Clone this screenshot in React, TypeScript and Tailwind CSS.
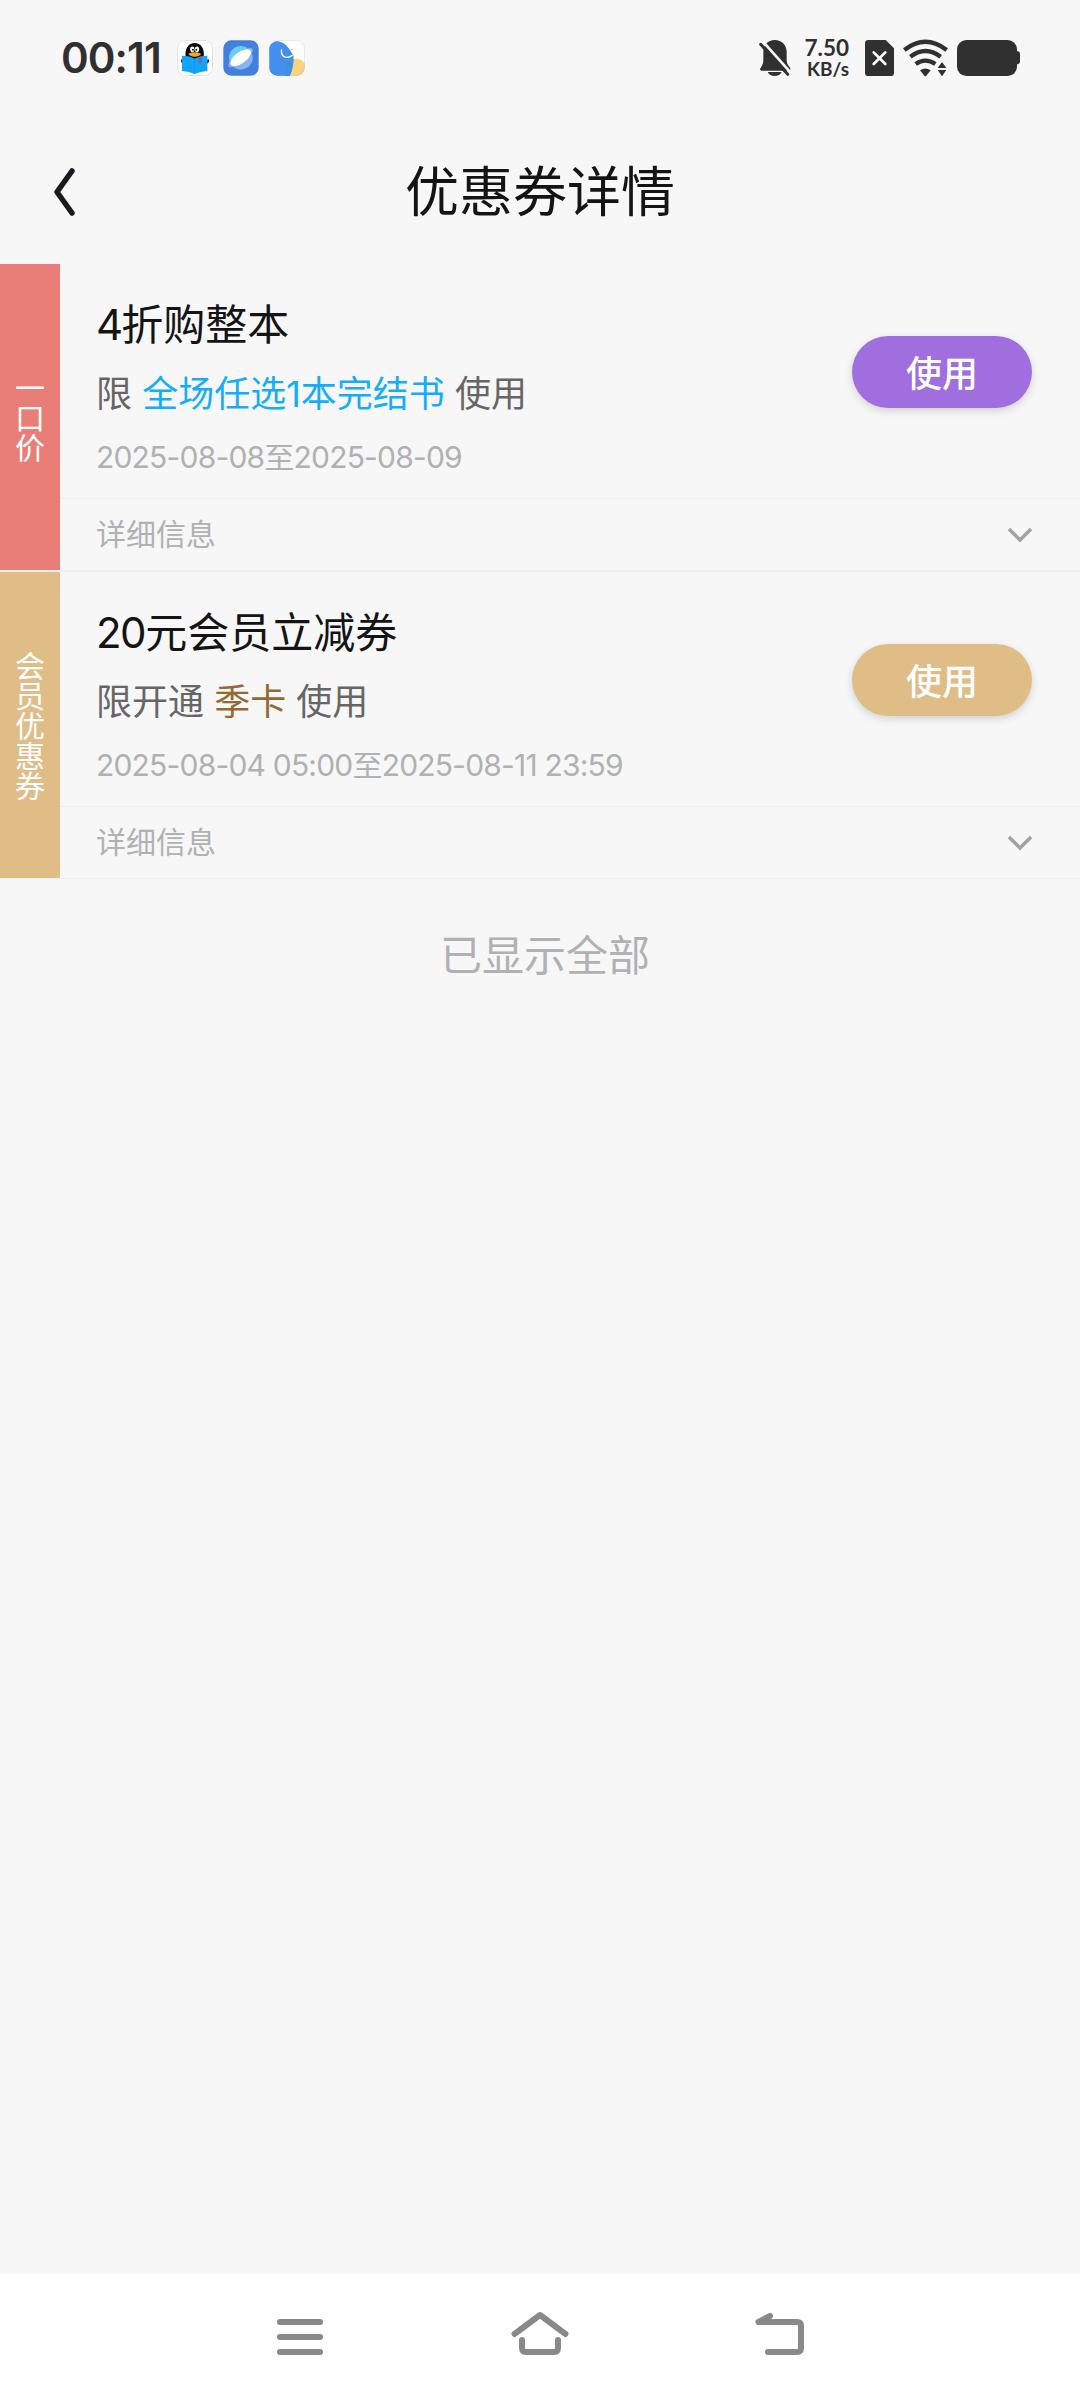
import type { ReactNode } from "react";
import { clsx } from "clsx";

interface Coupon {
  id: string;
  tag: string;
  title: ReactNode;
  scope: ReactNode;
  period: string;
  tagColor: string;
  buttonColor: string;
}

const COUPONS: Coupon[] = [
  {
    id: "fixed-price",
    tag: "一口价",
    title: (
      <>
        <span className="tracking-[-2px]">4</span>折购整本
      </>
    ),
    scope: (
      <>
        限 <span className="text-[#16adf8]">全场任选1本完结书</span> 使用
      </>
    ),
    period: "2025-08-08至2025-08-09",
    tagColor: "bg-[#e97e78]",
    buttonColor: "bg-[#a06edf]",
  },
  {
    id: "member",
    tag: "会员优惠券",
    title: (
      <>
        <span className="tracking-[-1.5px]">20</span>元会员立减券
      </>
    ),
    scope: (
      <>
        限开通 <span className="text-[#956932]">季卡</span> 使用
      </>
    ),
    period: "2025-08-04 05:00至2025-08-11 23:59",
    tagColor: "bg-[#e0bc87]",
    buttonColor: "bg-[#e0bc87]",
  },
];

function ReaderAppIcon() {
  return (
    <svg className="h-9 w-9" viewBox="0 0 108 108">
      <rect x="1.5" y="1.5" width="105" height="105" rx="24" fill="#fff" stroke="#e2e2e2" strokeWidth="3" />
      <path d="M26 52C22 24 36 9 53 9s31 15 27 43l-10 8H36z" fill="#080808" />
      <path d="M12 58l9 2v12c-6-1-11-6-9-14zM96 58l-9 2v12c6-1 11-6 9-14z" fill="#222" />
      <ellipse cx="46" cy="28" rx="6.5" ry="8.5" fill="#fff" />
      <ellipse cx="60" cy="28" rx="6.5" ry="8.5" fill="#fff" />
      <circle cx="48" cy="29" r="3" fill="#111" />
      <circle cx="58" cy="29" r="3" fill="#111" />
      <path d="M34 41q19-8 38 0-3 8-19 9-16-1-19-9z" fill="#f6a623" />
      <path d="M15 47q24 0 38 9 14-9 38-9v46q-22 1-38 9-16-8-38-9z" fill="#10a5fb" />
      <path d="M53 56v46" stroke="#0788dc" strokeWidth="1.5" />
      <path d="M65 51l9-2v22l-5-3-4 4z" fill="#8161a5" />
    </svg>
  );
}

function BrowserAppIcon() {
  return (
    <svg className="h-9 w-9" viewBox="0 0 108 108">
      <rect x="1" y="1" width="106" height="106" rx="24" fill="#437fdd" />
      <circle cx="53" cy="53" r="35" fill="#67cdf5" />
      <path d="M21 67L86 38a35 35 0 0 1-65 29z" fill="#8ab3f2" />
      <ellipse cx="53" cy="53" rx="44" ry="15" transform="rotate(-36 53 53)" fill="#8ab3f2" />
      <ellipse cx="53" cy="53" rx="36" ry="17" transform="rotate(-36 53 53)" fill="#fff" />
    </svg>
  );
}

function ElephantAppIcon() {
  return (
    <svg className="h-9 w-9" viewBox="0 0 108 108">
      <clipPath id="elephant-frame">
        <rect x="1" y="1" width="106" height="106" rx="24" />
      </clipPath>
      <g clipPath="url(#elephant-frame)">
        <rect width="108" height="108" fill="#fff" />
        <circle cx="81" cy="89" r="33" fill="#fad27e" />
        <path d="M0 22C8 6 22 2 32 5c19 4 31 23 41 41 3 18-2 41-11 62H0z" fill="#438ff0" />
        <path d="M48 82c2-12 12-22 24-25 1 16-2 36-10 51H50c-2-9-3-17-2-26z" fill="#3f91df" />
        <path d="M37 30c0 13 6 22 16 22 7 0 13-2 17-6" fill="none" stroke="#fff" strokeWidth="4" strokeLinecap="round" />
        <path d="M65 30q5-5 7 1" fill="none" stroke="#999" strokeWidth="2" />
      </g>
      <rect x="1.5" y="1.5" width="105" height="105" rx="24" fill="none" stroke="#000" strokeOpacity="0.08" strokeWidth="3" />
    </svg>
  );
}

function MutedBellIcon() {
  return (
    <svg className="h-[38px] w-8" viewBox="57 57 96 114">
      <path d="M104 60c22 0 36 15 36 36v24c0 9 3 15 9 22 4 6 2 10-3 10H65c-6 0-6-4-2-10 5-8 7-13 7-22V96c0-21 13-36 34-36z" fill="#303030" />
      <path d="M83 156h42c-4 8-11 12-21 12s-17-4-21-12z" fill="#303030" />
      <path d="M69 65L152 158" stroke="#f7f7f7" strokeWidth="8" />
      <path d="M62 73L143 163" stroke="#303030" strokeWidth="9" strokeLinecap="round" />
    </svg>
  );
}

function NoSimIcon() {
  return (
    <svg className="h-9 w-[29px]" viewBox="375 60 87 108">
      <path d="M385 60h52l25 25v73q0 10-10 10h-67q-10 0-10-10V70q0-10 10-10z" fill="#303030" />
      <path d="M401 97l35 35M436 97l-35 35" stroke="#fff" strokeWidth="8" strokeLinecap="round" />
    </svg>
  );
}

function WifiIcon() {
  return (
    <svg className="h-[38px] w-[45px]" viewBox="489 59 135 114">
      <g fill="none" stroke="#303030" strokeWidth="13">
        <path d="M493 92Q556 43 620 92" />
        <path d="M511 112Q556 78 602 112" />
        <path d="M527 134Q556 114 586 134" />
      </g>
      <path d="M540 153q16-11 32 0l-13 16q-3 3-6 0z" fill="#303030" />
      <path d="M593 146l13-18 13 18zM593 152h26l-13 19z" fill="#303030" />
    </svg>
  );
}

function BatteryIcon() {
  return (
    <svg className="h-9 w-[63px]" viewBox="651 60 189 108">
      <rect x="651" y="60" width="180" height="108" rx="28" fill="#303030" />
      <path d="M829 93q11 1 11 8v24q0 7-11 8z" fill="#303030" />
    </svg>
  );
}

function StatusBar() {
  return (
    <div className="flex h-[116px] items-center justify-between pr-[60px] pl-[60px] text-[#303030]">
      <div className="flex items-center">
        <span className="w-[117px] pl-px text-[42px] leading-none font-semibold tracking-[-0.9px]">00:11</span>
        <div className="flex gap-2.5">
          <ReaderAppIcon />
          <BrowserAppIcon />
          <ElephantAppIcon />
        </div>
      </div>
      <div className="flex items-center">
        <MutedBellIcon />
        <div className="ml-3 w-[46px] text-right font-[Lato] font-bold">
          <div className="text-[22.5px] leading-[22px]">7.50</div>
          <div className="text-[19px] leading-5">KB/s</div>
        </div>
        <div className="ml-4 flex items-center">
          <NoSimIcon />
          <span className="mr-[9px] ml-[9px] flex">
            <WifiIcon />
          </span>
          <BatteryIcon />
        </div>
      </div>
    </div>
  );
}

function Header() {
  return (
    <header className="grid h-[148px] grid-cols-[200px_1fr_200px] items-center pt-1">
      <button className="ml-[54px] w-[21px]" aria-label="返回">
        <svg className="h-12 w-[21px]" viewBox="0 0 21 48">
          <path d="M18 3L3 24l15 21" fill="none" stroke="#1a1a22" strokeWidth="5.5" strokeLinecap="round" strokeLinejoin="round" />
        </svg>
      </button>
      <h1 className="pt-0.5 text-center text-[54px] leading-[60px] text-[#141414]">优惠券详情</h1>
    </header>
  );
}

function CouponCard({ coupon }: { coupon: Coupon }) {
  return (
    <article className="flex h-[306px]">
      <div className={clsx("flex w-[60px] items-center justify-center pt-0.5 text-white", coupon.tagColor)}>
        <span className="w-[30px] text-[30px] leading-[30px] break-all">{coupon.tag}</span>
      </div>
      <div className="flex flex-1 flex-col">
        <div className="flex h-[234px] justify-between pr-12 pl-9">
          <div className="pt-[31px]">
            <h2 className="text-[42px] leading-[60px] text-[#141414]">{coupon.title}</h2>
            <p className="mt-[15px] text-4xl leading-12 text-[#666]">{coupon.scope}</p>
            <p className="mt-[19px] text-[30px] leading-10 tracking-[-0.8px] text-[#b0b1b2]">{coupon.period}</p>
          </div>
          <button
            className={clsx(
              "mt-[72px] h-[72px] w-[180px] rounded-full pt-0.5 text-4xl leading-[72px] font-medium text-white shadow-[0_3px_9px_rgba(0,0,0,0.15)]",
              coupon.buttonColor,
            )}
          >
            使用
          </button>
        </div>
        <div className="flex flex-1 items-center justify-between border-t border-[#eee] pr-12 pl-9">
          <span className="-mt-px text-[30px] leading-10 text-[#b0b1b2]">详细信息</span>
          <svg className="h-4 w-6" viewBox="0 0 24 16">
            <path d="M1 2l11 11L23 2" fill="none" stroke="#a3a3a3" strokeWidth="3.5" />
          </svg>
        </div>
      </div>
    </article>
  );
}

function NavBar() {
  return (
    <nav className="flex h-[126px] items-center justify-center gap-[180px] bg-white">
      <svg className="h-[60px] w-[60px]" viewBox="270 2307 60 60">
        <path d="M280 2322h40M280 2337h40M280 2352h40" fill="none" stroke="#898989" strokeWidth="6" strokeLinecap="round" />
      </svg>
      <svg className="h-[60px] w-[60px]" viewBox="510 2307 60 60">
        <g fill="none" stroke="#898989" strokeWidth="6" strokeLinecap="round" strokeLinejoin="round">
          <path d="M514.5 2334L540 2315l25.500 19" />
          <path d="M522 2340v8q0 4 4 4h28q4 0 4-4v-8" />
        </g>
      </svg>
      <svg className="h-[60px] w-[60px]" viewBox="750 2307 60 60">
        <path d="M770 2316l-11.500 6H797q4 0 4 4v22q0 4-4 4H768" fill="none" stroke="#898989" strokeWidth="6" strokeLinecap="round" strokeLinejoin="round" />
      </svg>
    </nav>
  );
}

export default function App() {
  return (
    <div className="flex h-[2400px] w-[1080px] flex-col bg-[#f7f7f7] font-[Inter,'Noto_Sans_CJK_SC',sans-serif]">
      <StatusBar />
      <Header />
      <main className="flex-1">
        <div className="flex flex-col gap-0.5 border-b border-[#eee] bg-[#efefef]">
          {COUPONS.map((coupon) => (
            <div key={coupon.id} className="bg-[#f7f7f7]">
              <CouponCard coupon={coupon} />
            </div>
          ))}
        </div>
        <p className="mt-[47px] pl-2.5 text-center text-[42px] leading-[60px] text-[#b0b1b2]">已显示全部</p>
      </main>
      <NavBar />
    </div>
  );
}
